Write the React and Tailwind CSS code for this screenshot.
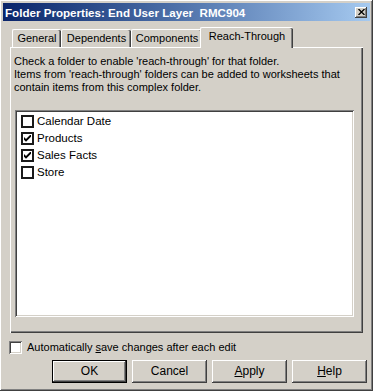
import React from "react";

const raised =
  "shadow-[inset_-1px_-1px_#404040,inset_1px_1px_#ffffff,inset_-2px_-2px_#808080,inset_2px_2px_#d4d0c8]";
const sunken =
  "shadow-[inset_1px_1px_#808080,inset_-1px_-1px_#ffffff,inset_2px_2px_#404040,inset_-2px_-2px_#d4d0c8]";

const CheckMark = () => (
  <svg width="7" height="7" viewBox="0 0 7 7">
    <path d="M0 2 L2 4 L7 -1 L7 1.8 L2 6.8 L0 4.8 Z" fill="#000" />
  </svg>
);

// list view checkboxes are flat with a heavy dark frame
const ListCheck = ({ checked }) => (
  <span className="w-[13px] h-[13px] bg-white border-2 border-[#1a1a1a] flex items-center justify-center shrink-0">
    {checked && <CheckMark />}
  </span>
);

const CheckBox = ({ checked }) => (
  <span
    className={`w-[13px] h-[13px] bg-white flex items-center justify-center shrink-0 ${sunken}`}
  >
    {checked && <CheckMark />}
  </span>
);

const Tab = ({ label, width, active }) =>
  active ? (
    <div
      className={`relative z-10 -mx-[2px] -mb-px h-[21px] ${width} bg-[#d4d0c8] border-l border-t border-white rounded-tl-[2px] rounded-tr-[2px] shadow-[inset_-1px_0_#404040,inset_-2px_0_#808080] flex justify-center pt-[2px]`}
    >
      {label}
    </div>
  ) : (
    <div
      className={`h-[18px] ${width} border-l border-t border-white rounded-tl-[2px] rounded-tr-[2px] shadow-[inset_-1px_0_#404040,inset_-2px_0_#808080] flex justify-center pt-[2px]`}
    >
      {label}
    </div>
  );

const Button = ({ children, primary }) => (
  <div
    className={`w-[75px] h-[23px] flex items-center justify-center ${
      primary ? "border border-black" : ""
    }`}
  >
    <div
      className={`w-full h-full flex items-center justify-center text-[12px] ${raised}`}
    >
      {children}
    </div>
  </div>
);

export default function App() {
  const folders = [
    { name: "Calendar Date", checked: false },
    { name: "Products", checked: true },
    { name: "Sales Facts", checked: true },
    { name: "Store", checked: false },
  ];

  return (
    <div
      className={`w-[373px] h-[391px] bg-[#d4d0c8] p-[3px] flex flex-col text-[11px] leading-[13px] text-black ${raised}`}
      style={{ fontFamily: '"Liberation Sans", Arial, sans-serif' }}
    >
      <div className="h-[18px] flex items-center justify-between pl-[2px] pr-[3px] bg-gradient-to-r from-[#0a246a] to-[#a6caf0]">
        <span className="text-white font-bold text-[11.6px]">
          Folder Properties: End User Layer&nbsp; RMC904
        </span>
        <div
          className={`w-[12px] h-[11px] bg-[#d4d0c8] flex items-center justify-center ${raised}`}
        >
          <svg width="7" height="6" viewBox="0 0 7 6">
            <path d="M0.5 0 L6.5 6 M6.5 0 L0.5 6" stroke="#000" strokeWidth="1.3" />
          </svg>
        </div>
      </div>

      <div className="mx-[7px] mt-[6px] flex flex-col">
        <div className="flex items-end pl-[2px]">
          <Tab label="General" width="w-[49px]" />
          <Tab label="Dependents" width="w-[70px]" />
          <Tab label="Components" width="w-[71px]" />
          <Tab label="Reach-Through" width="w-[93px]" active />
        </div>
        <div className="h-[286px] border-l border-t border-white shadow-[inset_-1px_-1px_#404040,inset_-2px_-2px_#808080] pl-[3px] pt-[7px]">
          <p>Check a folder to enable 'reach-through' for that folder.</p>
          <p>Items from 'reach-through' folders can be added to worksheets that</p>
          <p>contain items from this complex folder.</p>
          <div
            className={`mt-[16px] ml-px w-[339px] h-[207px] bg-white p-[2px] pt-[3px] pl-[6px] ${sunken}`}
          >
            {folders.map((f) => (
              <div key={f.name} className="h-[17px] flex items-center gap-[3px] text-[11.5px]">
                <ListCheck checked={f.checked} />
                <span>{f.name}</span>
              </div>
            ))}
          </div>
        </div>
      </div>

      <div className="mt-[8px] ml-[6px] flex items-center gap-[5px]">
        <CheckBox checked={false} />
        <span>
          Automatically <span className="underline">s</span>ave changes after each edit
        </span>
      </div>

      <div className="mt-[6px] pr-[3px] flex justify-end gap-[5px]">
        <Button primary>OK</Button>
        <Button>Cancel</Button>
        <Button>
          <span>
            <span className="underline">A</span>pply
          </span>
        </Button>
        <Button>
          <span>
            <span className="underline">H</span>elp
          </span>
        </Button>
      </div>
    </div>
  );
}
